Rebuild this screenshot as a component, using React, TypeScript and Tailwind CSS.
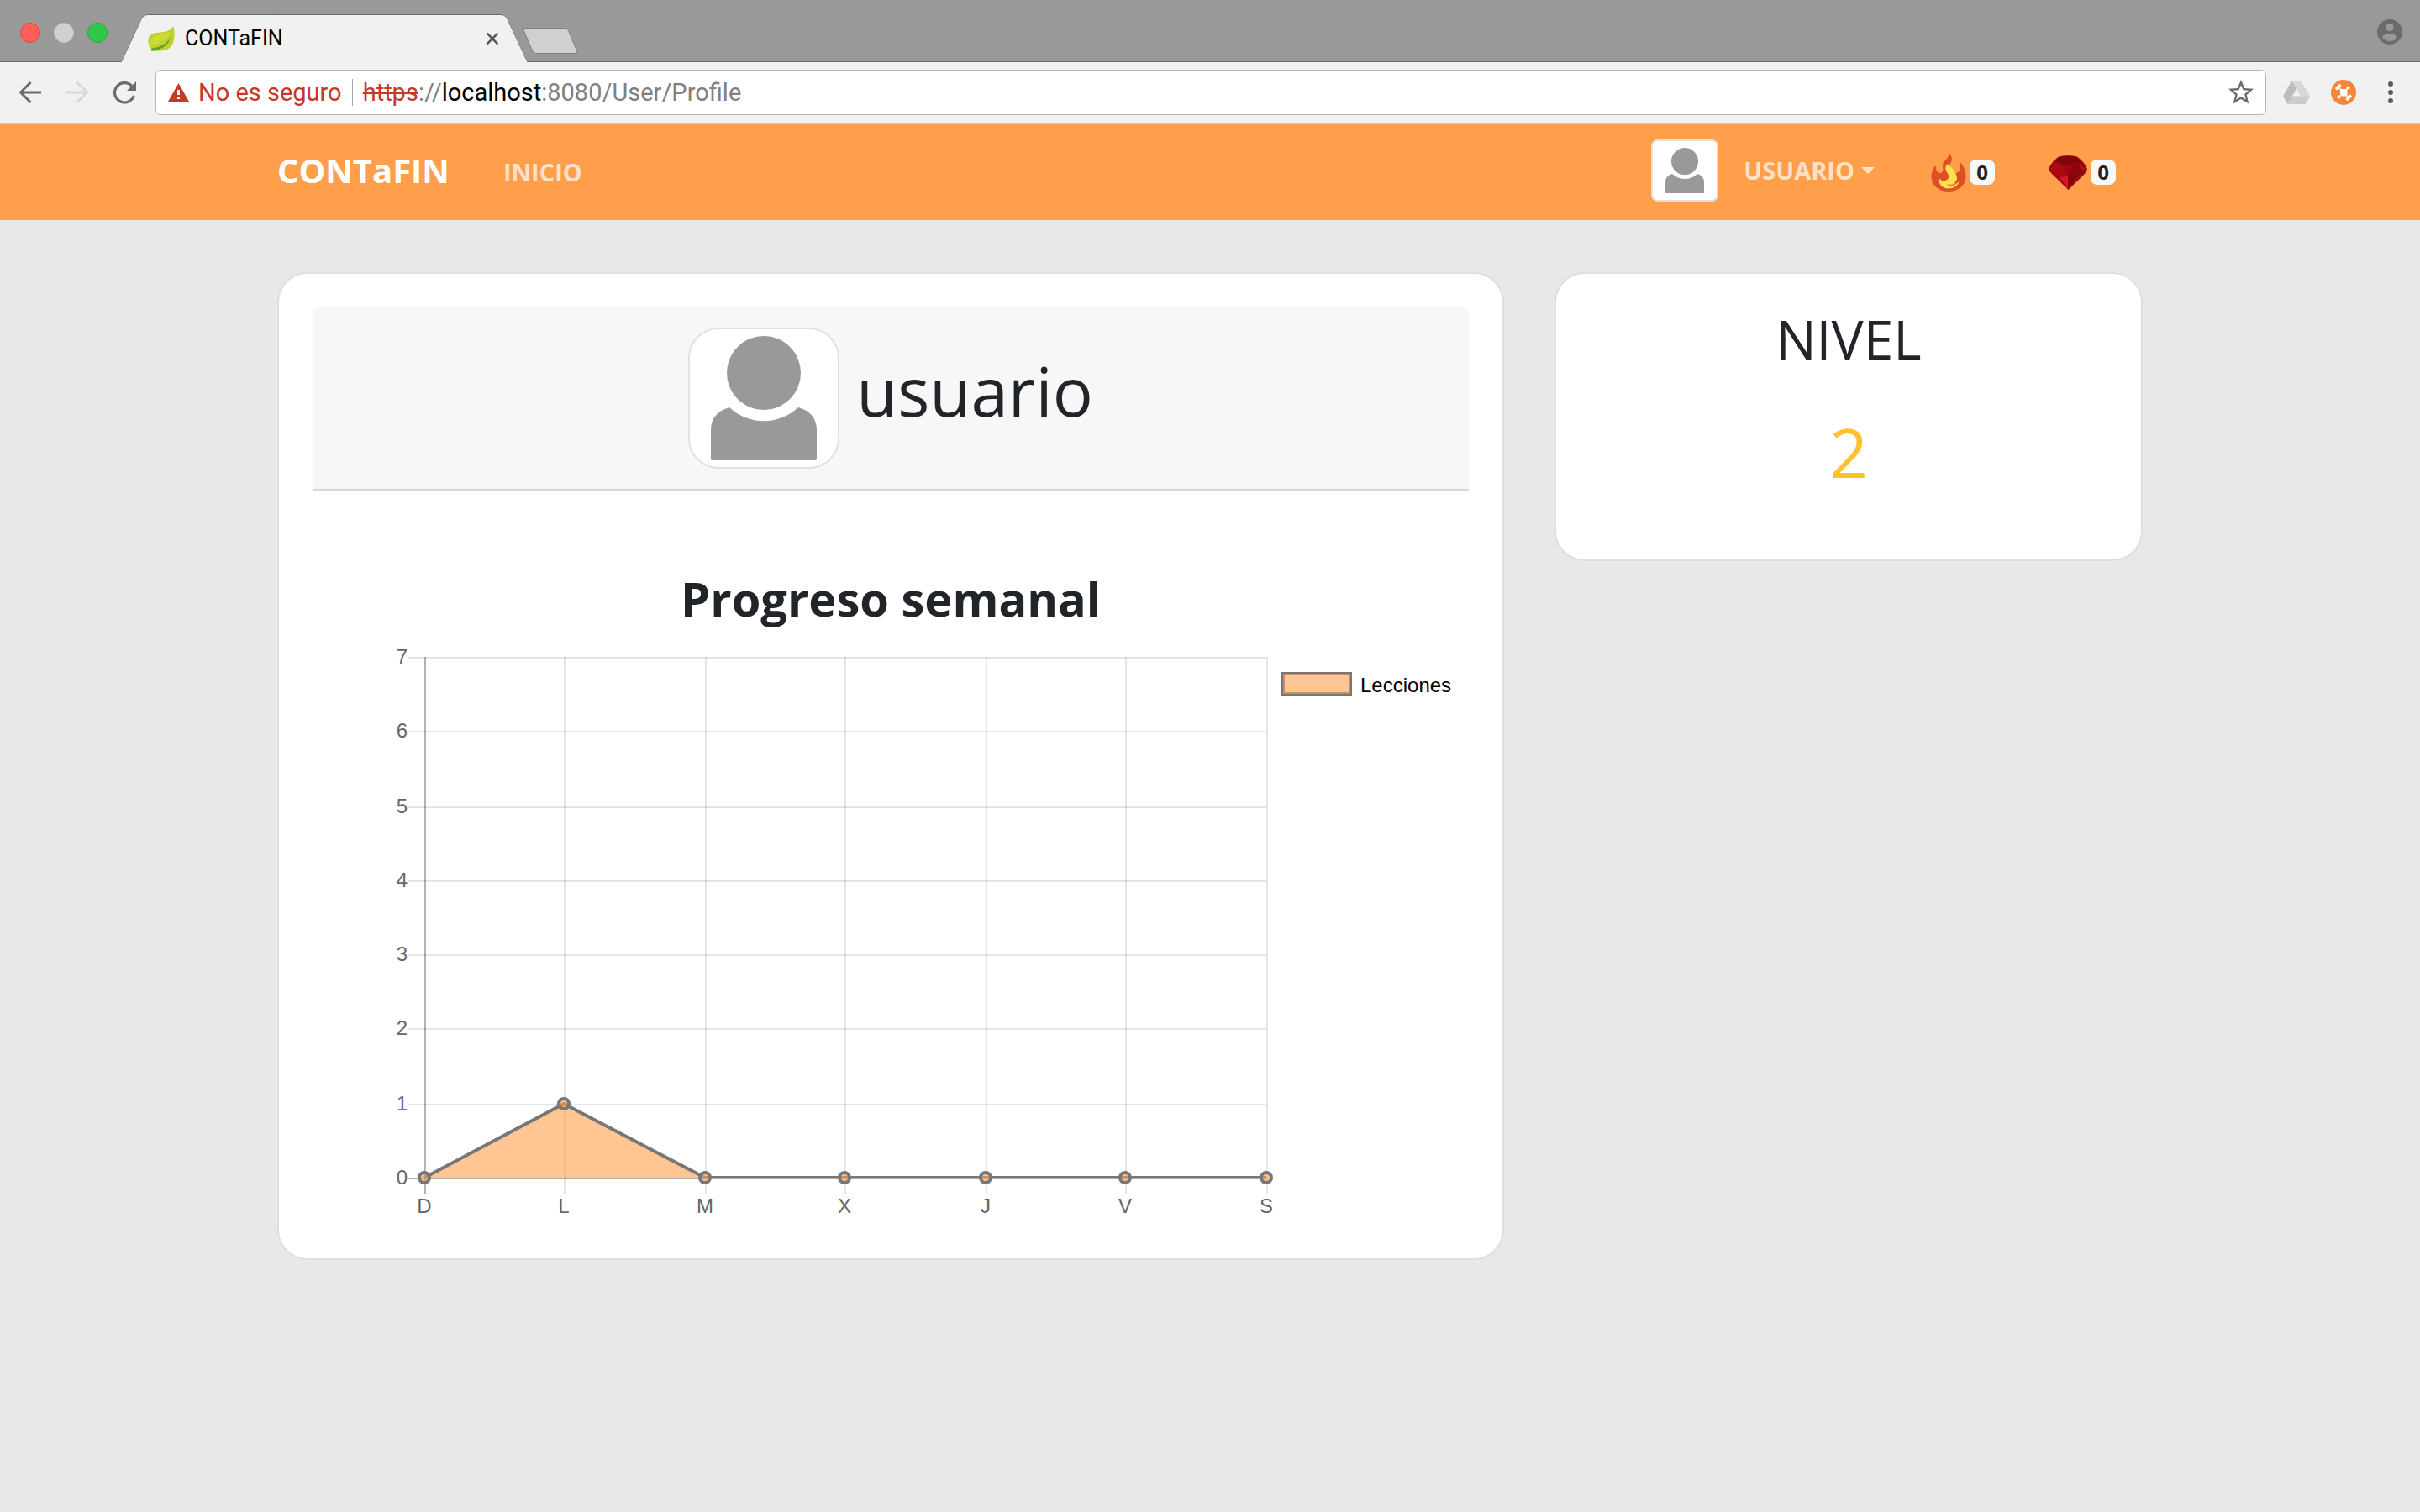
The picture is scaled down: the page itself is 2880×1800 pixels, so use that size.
import React from "react";

const DAYS = [
  { label: "D", x: 505, value: 0 },
  { label: "L", x: 671, value: 1 },
  { label: "M", x: 839, value: 0 },
  { label: "X", x: 1005, value: 0 },
  { label: "J", x: 1173, value: 0 },
  { label: "V", x: 1339, value: 0 },
  { label: "S", x: 1507, value: 0 },
];

const ROWS = [
  { label: "0", y: 1403 },
  { label: "1", y: 1315 },
  { label: "2", y: 1225 },
  { label: "3", y: 1137 },
  { label: "4", y: 1049 },
  { label: "5", y: 961 },
  { label: "6", y: 871 },
  { label: "7", y: 783 },
];

function Leaf() {
  return (
    <svg viewBox="0 0 32 32" className="size-8 shrink-0" aria-hidden="true">
      <path d="M30.5 1C31.5 6 32.500 14 30 21C27 29 20 31 12 30.500L5 31C3.500 30 3.500 29 4 27.500C1 25 0 21 .5 17C1.500 10 8 9 15 8.500C22 8 27.500 6 30.500 1Z" fill="#bfd02b" />
      <path d="M28 6C24 11 15 11 8 13C3 15 2.500 20 4 23C14 23 24 17 28 6Z" fill="#cbdc35" />
      <path d="M29 9C27 19 18 26 4.500 27.500L4 30.500C17 30 27 22 29 9Z" fill="#5f9c33" />
    </svg>
  );
}

function Person({ className, viewBox }: { className: string; viewBox: string }) {
  return (
    <svg viewBox={viewBox} className={className} aria-hidden="true">
      <circle cx="89" cy="54" r="44" fill="#999" />
      <path d="M48 95A60 60 0 0 0 130 95C145 99 152 109 152 122V156Q152 158 150 158H28Q26 158 26 156V122C26 109 33 99 48 95Z" fill="#999" />
    </svg>
  );
}

function Flame() {
  return (
    <svg viewBox="0 0 42 46" className="h-[46px] w-[42px] shrink-0" aria-hidden="true">
      <path d="M21.500 0C25.500 4 25.800 9 23 13C21.500 16 24 18.500 24.500 21C26 25 32 25 34 21C35.500 18 35 14 34.500 11C38.500 14 41.500 22 41.500 28C41.500 39 32 46 21 46C9 46 .5 38.500 .5 28C.5 23 2.500 18 5.500 15C5.500 19 7 24 11 24C15 24 14.500 19 14 16C13 9 22 8 21.500 0Z" fill="#e04e26" />
      <path d="M19.500 13C25 17 31 24 31 30C31 33 29.500 35 27 36.500C30 37 32 36 33.500 34C32 39.500 27 42.500 21 42.500C14 42.500 8.500 38 9 29C11 33 15 34 18.500 32.500C23 30 21 26 19 23C16.500 19.500 17 16 19.500 13Z" fill="#fde04f" />
      <path d="M19 37C24 39 29.500 37 32 34C30 40 23 41 19 37Z" fill="#e8742f" />
    </svg>
  );
}

function Gem() {
  return (
    <svg viewBox="0 0 46 41" className="h-[41px] w-[46px] shrink-0" aria-hidden="true">
      <path d="M12 1.500Q23-1 34 1.500Q42 7 46 16Q45 20 42 23L23.500 41L4 22Q1 19 0 16Q4 7 12 1.500Z" fill="#9c0710" />
      <path d="M12 2Q23-1 34 2L37 8Q23 14 9 8Z" fill="#83030a" />
      <path d="M9 8L15 11L21 24L13 26L1 18Z" fill="#ac0913" />
      <path d="M15 11L30 11L22 24Z" fill="#a00811" />
      <path d="M30 11L36 9L44 19L34 24L22 25Z" fill="#8d040c" />
      <path d="M36 9L44 17L38 16Z" fill="#b51520" />
      <path d="M13 26L23 25V40Z" fill="#d11a26" />
      <path d="M23 25L34 24L23.500 41Z" fill="#8a040c" />
    </svg>
  );
}

function Stat({ icon, label }: { icon: React.ReactNode; label: string }) {
  return (
    <div className="flex items-center gap-1" aria-label={label}>
      {icon}
      <span className="flex size-[30px] items-center justify-center rounded-lg bg-[#f8f9fa] text-[24px] leading-[30px] font-bold text-[#212529]">0</span>
    </div>
  );
}

function BrowserChrome() {
  return (
    <header className="font-[Roboto,sans-serif]">
      <div className="flex h-[74px] items-end border-b border-[#6b6b6b] bg-[#999] pr-[21px]">
        <div className="flex gap-4 self-center pt-1 pl-6">
          <button aria-label="Cerrar ventana" className="size-6 rounded-full border border-[#e0443e] bg-[#fe5f57]" />
          <button aria-label="Minimizar" className="size-6 rounded-full border border-[#c3c3c3] bg-[#d0d0d0]" />
          <button aria-label="Maximizar" className="size-6 rounded-full border border-[#24a637] bg-[#34c84a]" />
        </div>
        <div className="relative -mb-px ml-[29px] flex h-[57px] w-[458px] items-center">
          <span className="absolute inset-y-0 left-0 w-3/5 -skew-x-[25deg] rounded-tl-md border-t border-l border-[#6b6b6b] bg-[#f1f1f1]" />
          <span className="absolute inset-y-0 right-0 w-3/5 skew-x-[25deg] rounded-tr-md border-t border-r border-[#6b6b6b] bg-[#f1f1f1]" />
          <div className="relative flex flex-1 items-center gap-3 pr-[22px] pl-[19px]">
            <Leaf />
            <span className="flex-1 text-[25px] leading-8 text-black">CONTaFIN</span>
            <button aria-label="Cerrar pestaña">
              <svg viewBox="0 0 14 14" className="size-[14px]" stroke="#555" strokeWidth="2.600"><path d="M0.500 0.500L13.500 13.500M13.500 0.500L0.500 13.500" /></svg>
            </button>
          </div>
        </div>
        <button aria-label="Nueva pestaña" className="mb-[9px] ml-[13px] h-[31px] w-[54px] skew-x-[23deg] rounded-[4px] border border-[#808080] bg-[#d0d0d0]" />
        <button aria-label="Perfil" className="ml-auto self-center pt-0.5">
          <svg viewBox="0 0 30 30" className="size-[30px]">
            <circle cx="15" cy="15" r="15" fill="#6b6b6b" />
            <circle cx="15" cy="9.500" r="4.600" fill="#999" />
            <path d="M6 21Q9 17 15 17T24 21Q21 26 15 26T6 21Z" fill="#999" />
          </svg>
        </button>
      </div>
      <div className="flex h-[74px] items-center border-b border-[#cfcfcf] bg-[#f1f1f1] pr-8 pb-px pl-[23px]">
        <button aria-label="Atrás">
          <svg viewBox="0 0 26 26" className="size-[26px]" fill="none" stroke="#6b6b6b" strokeWidth="3"><path d="M13.500 1L1.500 13L13.500 25M1.500 13H26" /></svg>
        </button>
        <button aria-label="Adelante" className="ml-[30px]">
          <svg viewBox="0 0 26 26" className="size-[26px]" fill="none" stroke="#d8d8d8" strokeWidth="3"><path d="M12.500 1L24.500 13L12.500 25M24.500 13H0" /></svg>
        </button>
        <button aria-label="Recargar" className="ml-[30px]">
          <svg viewBox="0 0 28 28" className="size-7" fill="none"><path d="M22 6.500A11.700 11.700 0 1 0 24.300 18" stroke="#6b6b6b" strokeWidth="3.200" /><path d="M27 1V12H16Z" fill="#6b6b6b" /></svg>
        </button>
        <div className="ml-[22px] flex h-[54px] flex-1 items-center rounded-md border border-[#b6b6b6] bg-white pr-[11px] pl-[14px] text-[29px] leading-9">
          <svg viewBox="0 0 25 22" className="mr-[11px] h-[22px] w-[25px]" aria-hidden="true"><path d="M12.500 0L25 22H0Z" fill="#c53929" /><path d="M11 8H14V14H11ZM11 16H14V19H11Z" fill="#fff" /></svg>
          <span className="text-[#c53929]">No es seguro</span>
          <span className="mr-3 ml-3 h-8 w-px bg-[#a8a8a8]" />
          <label htmlFor="url" className="flex">
            <span className="text-[#c53929] line-through decoration-2">https</span>
            <span className="text-[#808080]">://</span>
            <span className="text-black">localhost</span>
          </label>
          <input id="url" defaultValue=":8080/User/Profile" className="min-w-0 flex-1 bg-transparent text-[#808080] outline-none" />
          <button aria-label="Añadir a marcadores">
            <svg viewBox="0 0 24 24" className="size-9" fill="#6b6b6b"><path d="M22 9.240l-7.190-.62L12 2 9.190 8.630 2 9.240l5.460 4.730L5.820 21 12 17.270 18.180 21l-1.630-7.030L22 9.240zM12 15.400l-3.760 2.270 1-4.280-3.320-2.880 4.380-.38L12 6.100l1.710 4.040 4.380.38-3.320 2.880 1 4.280L12 15.400z" /></svg>
          </button>
        </div>
        <button aria-label="Google Drive" className="ml-5">
          <svg viewBox="0 0 32 28" className="h-7 w-8">
            <path d="M10.500 0L0 18.500L5.500 28L16 9.500Z" fill="#bdbdbd" />
            <path d="M10.500 0H21.500L32 18.500H21Z" fill="#d8d8d8" />
            <path d="M11 18.500H32L26.500 28H5.500Z" fill="#cbcbcb" />
          </svg>
        </button>
        <button aria-label="Extensión" className="ml-[25px]">
          <svg viewBox="0 0 30 30" className="size-[30px]">
            <circle cx="15" cy="15" r="15" fill="#f6863a" />
            <g stroke="#fff" strokeLinecap="butt">
              <path d="M9 9L21 21M20 10L10 20" strokeWidth="1.600" />
              <path d="M6 11.500L11.500 6M18.500 24L24 18.500" strokeWidth="3.400" />
            </g>
            <rect x="11" y="11" width="8.500" height="8.500" rx="2.500" fill="#fff" />
            <circle cx="20.500" cy="9.500" r="2" fill="#fff" /><circle cx="9.500" cy="20.500" r="2" fill="#fff" />
          </svg>
        </button>
        <button aria-label="Menú" className="ml-[38px]">
          <svg viewBox="0 0 6 26" className="h-[26px] w-[6px]" fill="#5a5a5a"><circle cx="3" cy="3" r="3" /><circle cx="3" cy="13" r="3" /><circle cx="3" cy="23" r="3" /></svg>
        </button>
      </div>
    </header>
  );
}

function WeeklyChart() {
  const line = DAYS.map((d) => `${d.x},${1402 - d.value * 88}`).join(" ");
  return (
    <svg viewBox="372 758 1376 700" className="mt-3 h-auto w-full font-[Liberation_Sans,sans-serif] text-[24px]" role="img" aria-label="Lecciones por día">
      <defs>
        <clipPath id="plot"><rect x="500" y="770" width="1010" height="632" /></clipPath>
      </defs>
      {ROWS.map((r, i) => (
        <g key={r.label}>
          <path d={`M486 ${r.y}H1507`} stroke="#000" strokeOpacity={i === 0 ? 0.32 : 0.1} strokeWidth="2" />
          <text x="485" y={r.y + 7} textAnchor="end" fill="#666">{r.label}</text>
        </g>
      ))}
      {DAYS.map((d, i) => (
        <g key={d.label}>
          <path d={`M${d.x + 1} 782V1422`} stroke="#000" strokeOpacity={i === 0 ? 0.3 : 0.1} strokeWidth="2" />
          <text x={d.x} y="1444" textAnchor="middle" fill="#666">{d.label}</text>
        </g>
      ))}
      <g clipPath="url(#plot)">
        <polygon points={`${line} 505,1402`} fill="#ff9f4b" fillOpacity="0.600" />
        <polyline points={line} fill="none" stroke="#777" strokeWidth="4" />
      </g>
      {DAYS.map((d) => (
        <circle key={d.label} cx={d.x} cy={1402 - d.value * 88} r="6" fill="#ff9f4b" fillOpacity="0.600" stroke="#777" strokeWidth="4" />
      ))}
      <rect x="1527" y="802" width="80" height="24" fill="none" stroke="#777" strokeWidth="4" />
      <rect x="1527" y="802" width="80" height="24" fill="#ff9f4b" fillOpacity="0.600" />
      <text x="1619" y="824" fill="#000">Lecciones</text>
    </svg>
  );
}

export default function App() {
  return (
    <div className="min-h-screen bg-[#e8e8e8] font-[Open_Sans,sans-serif] text-[#212529]">
      <BrowserChrome />
      <nav className="bg-[#ff9f4b]">
        <div className="mx-auto flex h-[114px] max-w-[2280px] items-center px-[30px] font-bold">
          <a href="#inicio" className="pb-1 text-[40px] leading-[60px] text-white">CONTaFIN</a>
          <a href="#inicio" className="ml-16 text-[29px] leading-[48px] text-white/70">INICIO</a>
          <div className="mr-8 ml-auto flex items-center">
            <span className="mb-1 flex h-[74px] w-20 items-center justify-center rounded-lg border-2 border-[#dee2e6] bg-white">
              <Person className="h-[54px] w-12" viewBox="26 10 126 148" />
            </span>
            <button className="ml-[30px] flex items-center gap-2 pb-1 text-[29px] leading-[48px] text-white/70">
              USUARIO
              <svg viewBox="0 0 16 8" className="h-2 w-4" fill="currentColor" aria-hidden="true"><path d="M0 0H16L8 8Z" /></svg>
            </button>
            <div className="ml-[67px] flex gap-16">
              <Stat icon={<Flame />} label="Racha" />
              <Stat icon={<Gem />} label="Gemas" />
            </div>
          </div>
        </div>
      </nav>
      <main className="mx-auto grid max-w-[2280px] grid-cols-[minmax(0,73fr)_minmax(0,35fr)] items-start gap-15 px-[30px] pt-[62px] pb-16">
        <section className="rounded-[36px] border-2 border-[#dfdfdf] bg-white p-10">
          <div className="flex items-center justify-center gap-5 rounded-t-md border-b-2 border-[#d8d8d8] bg-[#f7f7f7] py-6">
            <span className="flex h-[168px] w-[180px] items-center justify-center rounded-[36px] border-2 border-[#dee2e6] bg-white">
              <Person className="h-[148px] w-[126px]" viewBox="26 10 126 148" />
            </span>
            <h1 className="pb-[18px] text-[80px] leading-[96px]">usuario</h1>
          </div>
          <h2 className="mt-[94px] text-center text-[56px] leading-[68px] font-bold">Progreso semanal</h2>
          <WeeklyChart />
        </section>
        <section className="rounded-[36px] border-2 border-[#dfdfdf] bg-white px-10 pt-10 pb-20 text-center">
          <h2 className="text-[64px] leading-[76px]">NIVEL</h2>
          <p className="mt-12 text-[80px] leading-[96px] text-[#ffc12e]">2</p>
        </section>
      </main>
    </div>
  );
}
